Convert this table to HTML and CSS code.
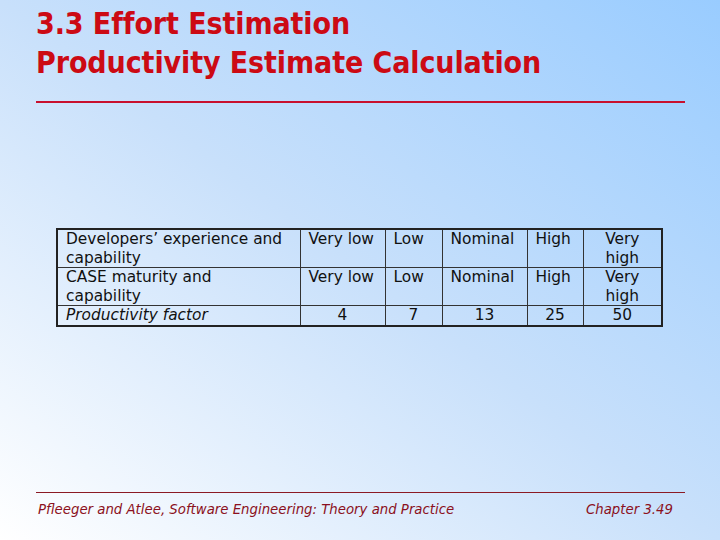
FILE: index.html
```html
<!DOCTYPE html>
<html>
<head>
<meta charset="utf-8">
<link rel="stylesheet" href="styles.css">
</head>
<body>
<div class="slide">
  <header class="head">
    <h1 class="title">3.3 Effort Estimation<br>Productivity Estimate Calculation</h1>
    <div class="rule"></div>
  </header>
  <main class="content">
    <table class="grid">
      <colgroup>
        <col class="c1"><col class="c2"><col class="c3"><col class="c4"><col class="c5"><col class="c6">
      </colgroup>
      <tr>
        <td class="lbl">Developers’ experience and capability</td>
        <td>Very low</td>
        <td>Low</td>
        <td>Nominal</td>
        <td>High</td>
        <td class="ctr">Very high</td>
      </tr>
      <tr>
        <td class="lbl">CASE maturity and capability</td>
        <td>Very low</td>
        <td>Low</td>
        <td>Nominal</td>
        <td>High</td>
        <td class="ctr">Very high</td>
      </tr>
      <tr>
        <td class="lbl em">Productivity factor</td>
        <td class="ctr">4</td>
        <td class="ctr">7</td>
        <td class="ctr">13</td>
        <td class="ctr">25</td>
        <td class="ctr">50</td>
      </tr>
    </table>
  </main>
  <footer class="foot">
    <span>Pfleeger and Atlee, Software Engineering: Theory and Practice</span>
    <span>Chapter 3.49</span>
  </footer>
</div>
</body>
</html>
```
FILE: styles.css
```css
html, body {
  margin: 0;
  padding: 0;
}
body {
  width: 720px;
  height: 540px;
  overflow: hidden;
}
.slide {
  width: 720px;
  height: 540px;
  box-sizing: border-box;
  background: linear-gradient(to top right, #ffffff 0%, #c8e0fb 50%, #99ccff 100%);
  display: flex;
  flex-direction: column;
  padding: 0 35px 0 36px;
}
.head {
  padding-top: 4px;
}
.title {
  margin: 0;
  font-family: "DejaVu Sans Condensed", "DejaVu Sans", sans-serif;
  font-weight: bold;
  font-size: 30px;
  line-height: 39px;
  color: #cc0a14;
  letter-spacing: -0.1px;
}
.rule {
  margin-top: 19px;
  height: 2px;
  background: #c8102e;
}
.content {
  flex: 1;
  padding-top: 125px;
  padding-left: 20px;
}
.grid {
  border-collapse: collapse;
  border: 2px solid #222;
  font-family: "DejaVu Sans", Verdana, sans-serif;
  font-size: 15.4px;
  line-height: 18.5px;
  color: #111;
}
.grid td {
  border: 1px solid #333;
  padding: 0 4px 0 8px;
  vertical-align: top;
}
.grid td.lbl {
  padding: 0 13px 0 8px;
}
.c1 { width: 243px; }
.c2 { width: 85px; }
.c3 { width: 57px; }
.c4 { width: 85px; }
.c5 { width: 56px; }
.c6 { width: 79px; }
.grid td.ctr { text-align: center; padding: 0 4px; }
.em { font-style: italic; }
.foot {
  border-top: 1px solid #8b1a24;
  margin-bottom: 13px;
  padding: 8px 12px 0 2px;
  display: flex;
  justify-content: space-between;
  font-family: "DejaVu Sans", Verdana, sans-serif;
  font-style: italic;
  font-size: 13.3px;
  line-height: 18px;
  height: 26px;
  color: #8b1020;
}
```
